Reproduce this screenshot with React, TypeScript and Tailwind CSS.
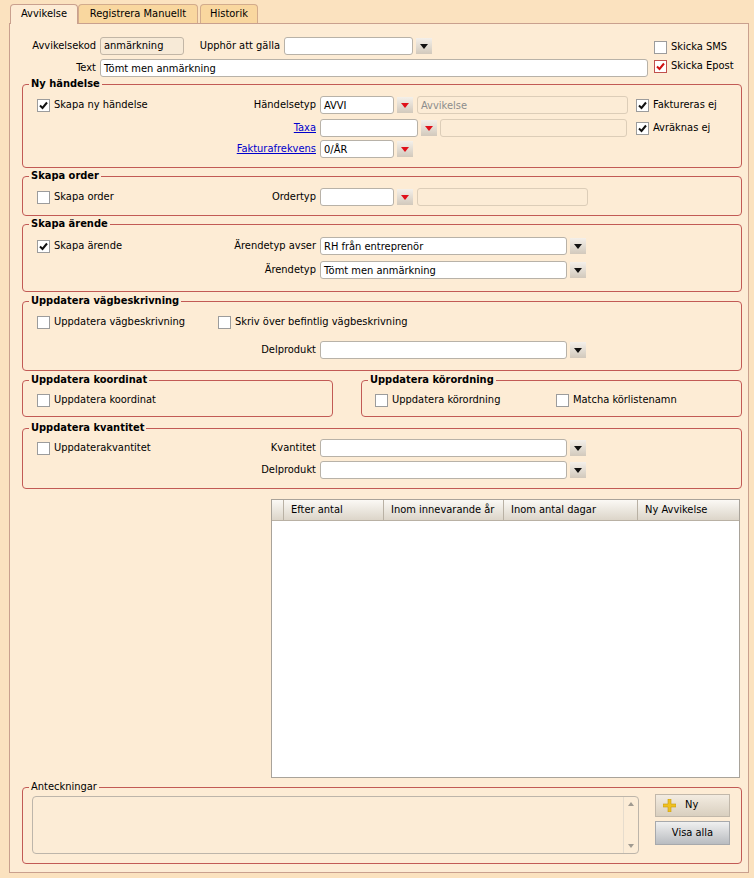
import React from "react";

const font = { fontFamily: '"DejaVu Sans Condensed", "Liberation Sans", sans-serif' };

const Inp = ({ w, value = "", disabled = false }: { w: string; value?: string; disabled?: boolean }) => (
  <div
    className={`${w} h-[18px] rounded-[3px] border px-[3px] flex items-center text-[11px] leading-none whitespace-nowrap overflow-hidden ${
      disabled ? "bg-[#fcecd6] border-[#dccdb8] text-[#8c8c8c]" : "bg-white border-[#b8b2a8] text-black"
    }`}
  >
    {value}
  </div>
);

const Drop = ({ red = false }: { red?: boolean }) => (
  <div className="w-[16px] h-[16px] flex items-center justify-center bg-gradient-to-b from-[#f4f0ea] to-[#d2c9bc]">
    <svg width="8" height="5" viewBox="0 0 8 5">
      <path d="M0 0 H8 L4 5 Z" fill={red ? "#e0101a" : "#111"} />
    </svg>
  </div>
);

const Check = ({ checked = false, red = false }: { checked?: boolean; red?: boolean }) => (
  <div
    className={`w-[13px] h-[13px] border bg-white flex items-center justify-center shrink-0 ${
      red ? "border-[#c0504d]" : "border-[#9c9c9c]"
    }`}
  >
    {checked && (
      <svg width="9" height="9" viewBox="0 0 9 9">
        <path d="M1 4.5 L3.5 7 L8 1.5" fill="none" stroke={red ? "#d01010" : "#111"} strokeWidth="2" />
      </svg>
    )}
  </div>
);

const CheckLabel = ({ label, checked, red }: { label: string; checked?: boolean; red?: boolean }) => (
  <div className="flex items-center gap-[4px] text-[11px] whitespace-nowrap">
    <Check checked={checked} red={red} />
    <span>{label}</span>
  </div>
);

const Label = ({ w, children }: { w: string; children: React.ReactNode }) => (
  <div className={`${w} text-right text-[11px] whitespace-nowrap pr-[4px]`}>{children}</div>
);

const LinkText = ({ children }: { children: React.ReactNode }) => (
  <span className="text-[#0000cc] underline">{children}</span>
);

const Group = ({
  title,
  h,
  w = "w-[720px]",
  bold = true,
  children,
}: {
  title: string;
  h: string;
  w?: string;
  bold?: boolean;
  children: React.ReactNode;
}) => (
  <fieldset className={`${w} ${h} border border-[#c25a55] rounded-[4px]`}>
    <legend className={`ml-[6px] px-[2px] text-[11px] leading-[12px] ${bold ? "font-bold" : ""}`}>{title}</legend>
    {children}
  </fieldset>
);

const Row = ({ children, className = "" }: { children: React.ReactNode; className?: string }) => (
  <div className={`flex items-center h-[18px] ${className}`}>{children}</div>
);

export default function App() {
  return (
    <div style={font} className="w-[754px] h-[878px] bg-[#fbe2bf] text-black text-[11px] overflow-hidden">
      {/* tabs */}
      <div className="flex items-end pt-[3px] pl-[10px] h-[23px]">
        <div className="relative z-10 w-[68px] h-[20px] -mb-[1px] bg-[#fdecd5] border border-b-0 border-[#c9a08e] rounded-t-[4px] flex items-center justify-center">
          Avvikelse
        </div>
        <div className="w-[120px] h-[19px] bg-[#f9d79f] border border-b-0 border-[#d2ab8c] rounded-t-[4px] flex items-center justify-center">
          Registrera Manuellt
        </div>
        <div className="ml-[2px] w-[58px] h-[19px] bg-[#f9d79f] border border-b-0 border-[#d2ab8c] rounded-t-[4px] flex items-center justify-center">
          Historik
        </div>
      </div>

      {/* panel */}
      <div className="ml-[9px] w-[740px] h-[850px] bg-[#fdecd5] border border-[#c9a08e] pt-[13px]">
        {/* top rows */}
        <div className="flex">
          <div className="w-[644px]">
            <Row>
              <Label w="w-[90px]">Avvikelsekod</Label>
              <div className="w-[84px] h-[18px] rounded-[3px] border border-[#c2b6a6] bg-[#f7ead7] px-[3px] flex items-center">
                anmärkning
              </div>
              <Label w="w-[100px]">Upphör att gälla</Label>
              <Inp w="w-[129px]" />
              <div className="ml-[3px]">
                <Drop />
              </div>
            </Row>
            <Row className="mt-[4px]">
              <Label w="w-[90px]">Text</Label>
              <Inp w="w-[548px]" value="Tömt men anmärkning" />
            </Row>
          </div>
          <div className="pt-[1px] flex flex-col gap-[1px]">
            <div className="h-[18px] flex items-center">
              <CheckLabel label="Skicka SMS" />
            </div>
            <div className="h-[18px] flex items-center">
              <CheckLabel label="Skicka Epost" checked red />
            </div>
          </div>
        </div>

        <div className="ml-[12px] mt-[1px] flex flex-col">
          {/* Ny händelse */}
          <Group title="Ny händelse" h="h-[90px]">
            <div className="pt-[6px] pl-[14px]">
              <Row>
                <div className="w-[150px]">
                  <CheckLabel label="Skapa ny händelse" checked />
                </div>
                <Label w="w-[133px]">Händelsetyp</Label>
                <Inp w="w-[74px]" value="AVVI" />
                <div className="ml-[3px]">
                  <Drop red />
                </div>
                <div className="ml-[4px]">
                  <Inp w="w-[211px]" value="Avvikelse" disabled />
                </div>
                <div className="ml-[8px]">
                  <CheckLabel label="Faktureras ej" checked />
                </div>
              </Row>
              <Row className="mt-[5px]">
                <div className="w-[150px]" />
                <Label w="w-[133px]">
                  <LinkText>Taxa</LinkText>
                </Label>
                <Inp w="w-[98px]" />
                <div className="ml-[3px]">
                  <Drop red />
                </div>
                <div className="ml-[3px]">
                  <Inp w="w-[187px]" disabled />
                </div>
                <div className="ml-[9px]">
                  <CheckLabel label="Avräknas ej" checked />
                </div>
              </Row>
              <Row className="mt-[3px]">
                <div className="w-[150px]" />
                <Label w="w-[133px]">
                  <LinkText>Fakturafrekvens</LinkText>
                </Label>
                <Inp w="w-[74px]" value="0/ÅR" />
                <div className="ml-[3px]">
                  <Drop red />
                </div>
              </Row>
            </div>
          </Group>

          {/* Skapa order */}
          <div className="mt-[2px]">
            <Group title="Skapa order" h="h-[46px]">
              <div className="pt-[6px] pl-[14px]">
                <Row>
                  <div className="w-[150px]">
                    <CheckLabel label="Skapa order" />
                  </div>
                  <Label w="w-[133px]">Ordertyp</Label>
                  <Inp w="w-[74px]" />
                  <div className="ml-[3px]">
                    <Drop red />
                  </div>
                  <div className="ml-[4px]">
                    <Inp w="w-[171px]" disabled />
                  </div>
                </Row>
              </div>
            </Group>
          </div>

          {/* Skapa ärende */}
          <div className="mt-[2px]">
            <Group title="Skapa ärende" h="h-[74px]">
              <div className="pt-[7px] pl-[14px]">
                <Row>
                  <div className="w-[150px]">
                    <CheckLabel label="Skapa ärende" checked />
                  </div>
                  <Label w="w-[133px]">Ärendetyp avser</Label>
                  <Inp w="w-[247px]" value="RH från entreprenör" />
                  <div className="ml-[3px]">
                    <Drop />
                  </div>
                </Row>
                <Row className="mt-[6px]">
                  <div className="w-[150px]" />
                  <Label w="w-[133px]">Ärendetyp</Label>
                  <Inp w="w-[247px]" value="Tömt men anmärkning" />
                  <div className="ml-[3px]">
                    <Drop />
                  </div>
                </Row>
              </div>
            </Group>
          </div>

          {/* Uppdatera vägbeskrivning */}
          <div className="mt-[3px]">
            <Group title="Uppdatera vägbeskrivning" h="h-[76px]">
              <div className="pt-[6px] pl-[14px]">
                <Row>
                  <div className="w-[181px]">
                    <CheckLabel label="Uppdatera vägbeskrivning" />
                  </div>
                  <CheckLabel label="Skriv över befintlig vägbeskrivning" />
                </Row>
                <Row className="mt-[10px]">
                  <div className="w-[150px]" />
                  <Label w="w-[133px]">Delprodukt</Label>
                  <Inp w="w-[247px]" />
                  <div className="ml-[3px]">
                    <Drop />
                  </div>
                </Row>
              </div>
            </Group>
          </div>

          {/* koordinat / körordning */}
          <div className="mt-[3px] flex gap-[28px]">
            <Group title="Uppdatera koordinat" h="h-[43px]" w="w-[311px]">
              <div className="pt-[5px] pl-[14px]">
                <Row>
                  <CheckLabel label="Uppdatera koordinat" />
                </Row>
              </div>
            </Group>
            <Group title="Uppdatera körordning" h="h-[43px]" w="w-[381px]">
              <div className="pt-[5px] pl-[13px]">
                <Row>
                  <div className="w-[181px]">
                    <CheckLabel label="Uppdatera körordning" />
                  </div>
                  <CheckLabel label="Matcha körlistenamn" />
                </Row>
              </div>
            </Group>
          </div>

          {/* Uppdatera kvantitet */}
          <div className="mt-[5px]">
            <Group title="Uppdatera kvantitet" h="h-[67px]">
              <div className="pt-[5px] pl-[14px]">
                <Row>
                  <div className="w-[150px]">
                    <CheckLabel label="Uppdaterakvantitet" />
                  </div>
                  <Label w="w-[133px]">Kvantitet</Label>
                  <Inp w="w-[247px]" />
                  <div className="ml-[3px]">
                    <Drop />
                  </div>
                </Row>
                <Row className="mt-[4px]">
                  <div className="w-[150px]" />
                  <Label w="w-[133px]">Delprodukt</Label>
                  <Inp w="w-[247px]" />
                  <div className="ml-[3px]">
                    <Drop />
                  </div>
                </Row>
              </div>
            </Group>
          </div>
        </div>

        {/* grid */}
        <div className="ml-[261px] mt-[10px] w-[469px] h-[279px] border border-[#a9a39a] bg-white flex flex-col">
          <div className="h-[21px] flex bg-gradient-to-b from-[#fbf9f5] to-[#dcd5c9] border-b border-[#b9b1a4] text-[11px]">
            <div className="w-[12px] border-r border-[#b9b1a4]" />
            <div className="w-[100px] border-r border-[#b9b1a4] pl-[7px] flex items-center">Efter antal</div>
            <div className="w-[120px] border-r border-[#b9b1a4] pl-[7px] flex items-center">Inom innevarande år</div>
            <div className="w-[134px] border-r border-[#b9b1a4] pl-[7px] flex items-center">Inom antal dagar</div>
            <div className="flex-1 pl-[7px] flex items-center">Ny Avvikelse</div>
          </div>
        </div>

        {/* Anteckningar */}
        <div className="ml-[12px] mt-[3px]">
          <Group title="Anteckningar" h="h-[83px]" bold={false}>
            <div className="pt-[3px] pl-[9px] flex items-start">
              <div className="w-[607px] h-[58px] rounded-[4px] border border-[#bdb5aa] bg-[#fcecd6] flex justify-end">
                <div className="w-[15px] h-full flex flex-col items-center justify-between py-[5px] border-l border-[#e6dccd]">
                  <svg width="6" height="4" viewBox="0 0 6 4">
                    <path d="M0 4 L3 0 L6 4 Z" fill="#a09a90" />
                  </svg>
                  <svg width="6" height="4" viewBox="0 0 6 4">
                    <path d="M0 0 L6 0 L3 4 Z" fill="#a09a90" />
                  </svg>
                </div>
              </div>
              <div className="ml-[16px] -mt-[2px] flex flex-col gap-[4px]">
                <div className="w-[75px] h-[23px] border border-[#c2b8aa] bg-gradient-to-b from-[#f3ece1] to-[#d9cfbf] flex items-center pl-[7px] gap-[9px]">
                  <svg width="13" height="13" viewBox="0 0 13 13">
                    <path d="M5 0 H8 V5 H13 V8 H8 V13 H5 V8 H0 V5 H5 Z" fill="#f0c020" stroke="#c89a10" strokeWidth="0.6" />
                  </svg>
                  <span>Ny</span>
                </div>
                <div className="w-[75px] h-[24px] border border-[#a7a9ac] bg-gradient-to-b from-[#f0f0f0] to-[#b9bcc0] flex items-center justify-center">
                  Visa alla
                </div>
              </div>
            </div>
          </Group>
        </div>
      </div>
    </div>
  );
}
